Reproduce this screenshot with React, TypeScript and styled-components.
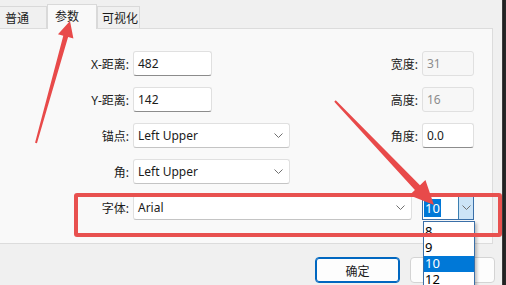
import React from 'react';
import styled, { createGlobalStyle, css } from 'styled-components';

const GlobalStyle = createGlobalStyle`
  html, body {
    margin: 0;
    padding: 0;
    background: #f0f0f0;
  }
  body {
    font-family: "Noto Sans", "Noto Sans CJK SC", sans-serif;
    color: #1b1b1b;
  }
  * { box-sizing: border-box; }
`;

const Screen = styled.div`
  position: relative;
  display: flex;
  width: 506px;
  height: 285px;
  overflow: hidden;
  background: #f0f0f0;
`;

const Dialog = styled.div`
  display: flex;
  flex-direction: column;
  width: 502px;
`;

const EdgeStrip = styled.div`
  width: 4px;
  background: linear-gradient(to right, #5a5a5a 0, #1e1e1e 1px, #2a2a2a 100%);
`;

const TabStrip = styled.div`
  display: flex;
  align-items: flex-end;
  height: 28px;
  margin-left: -1px;
  position: relative;
  z-index: 2;
`;

const Tab = styled.div<{ $width: number; $pad: number; $active?: boolean }>`
  width: ${p => p.$width}px;
  height: 22px;
  display: flex;
  align-items: center;
  padding-left: ${p => p.$pad}px;
  font-family: "Noto Sans CJK SC", sans-serif;
  font-size: 12px;
  background: #f0f0f0;
  border: 1px solid #d9d9d9;
  border-bottom: none;
  color: #1b1b1b;
  white-space: nowrap;
  ${p =>
    p.$active &&
    css`
      height: 25px;
      margin-bottom: -1px;
      background: #f9f9f9;
      padding-bottom: 3px;
    `}
`;

const Panel = styled.div`
  width: 494px;
  height: 216px;
  margin-left: -1px;
  padding: 22px 18px 0 0;
  background: #f9f9f9;
  border: 1px solid #dcdcdc;
  display: flex;
  flex-direction: column;
  gap: 11px;
`;

const Row = styled.div`
  display: flex;
  align-items: center;
  height: 25px;
`;

const Label = styled.span<{ $width?: number }>`
  ${p => p.$width !== undefined && css`width: ${p.$width}px;`}
  text-align: right;
  margin-right: 4px;
  font-family: "Noto Sans", "Noto Sans CJK SC", sans-serif;
  font-size: 12px;
  color: #1b1b1b;
  white-space: nowrap;
`;

const RightGroup = styled.div`
  margin-left: auto;
  display: flex;
  align-items: center;
`;

const Field = styled.div<{ $width: number; $disabled?: boolean }>`
  width: ${p => p.$width}px;
  height: 25px;
  display: flex;
  align-items: center;
  padding: 0 4px;
  font-size: 12px;
  background: #ffffff;
  border: 1px solid #e0e0e0;
  border-bottom-color: #8c8c8c;
  border-radius: 3px;
  color: #1b1b1b;
  ${p =>
    p.$disabled &&
    css`
      background: #f7f7f7;
      border-bottom-color: #e0e0e0;
      color: #8c8c8c;
    `}
`;

const SelectBox = styled(Field)`
  justify-content: space-between;
  padding-right: 6px;
  border-color: #e0e0e0;
  border-bottom-color: #c4c4c4;
`;

const Combo = styled.div`
  width: 52px;
  height: 25px;
  display: flex;
  background: #ffffff;
  border: 1px solid #3a6fa8;
`;

const ComboText = styled.div`
  flex: 1;
  display: flex;
  align-items: center;
  padding-left: 1px;
`;

const Selected = styled.span`
  background: #0078d7;
  color: #ffffff;
  font-size: 13px;
  line-height: 18px;
  padding: 0 1px;
`;

const ComboButton = styled.div`
  width: 15px;
  display: flex;
  align-items: center;
  justify-content: center;
  background: #cce4f7;
  border-left: 1px solid #3c7fb1;
`;

const DropList = styled.div`
  position: absolute;
  left: 423px;
  top: 221px;
  width: 52px;
  height: 70px;
  padding-top: 2px;
  background: #ffffff;
  border: 1px solid #3a6fa8;
  box-shadow: 2px 2px 3px rgba(0, 0, 0, 0.25);
  z-index: 5;
`;

const ListItem = styled.div<{ $active?: boolean }>`
  height: 16px;
  line-height: 14px;
  padding-left: 1px;
  font-size: 13px;
  color: #000;
  ${p =>
    p.$active &&
    css`
      background: #0078d7;
      color: #fff;
    `}
`;

const Footer = styled.div`
  display: flex;
  justify-content: flex-end;
  gap: 10px;
  margin-top: 13px;
  padding-right: 7px;
`;

const Button = styled.div<{ $primary?: boolean }>`
  width: 85px;
  height: 26px;
  display: flex;
  align-items: center;
  justify-content: center;
  font-family: "Noto Sans CJK SC", sans-serif;
  font-size: 12px;
  background: #fdfdfd;
  border: 1px solid ${p => (p.$primary ? '#0067c0' : '#d4d4d4')};
  box-shadow: ${p => (p.$primary ? 'inset 0 0 0 1px #0067c0' : 'none')};
  border-radius: 4px;
`;

const Highlight = styled.div`
  position: absolute;
  left: 74px;
  top: 193px;
  width: 428px;
  height: 44px;
  border: 4px solid #e8514f;
  border-radius: 3px;
  z-index: 6;
  pointer-events: none;
`;

const ArrowLayer = styled.svg`
  position: absolute;
  left: 0;
  top: 0;
  z-index: 7;
  pointer-events: none;
`;

const Chevron = () => (
  <svg width="9" height="5" viewBox="0 0 9 5">
    <polyline points="0.5,0.5 4.5,4.5 8.5,0.5" fill="none" stroke="#707070" strokeWidth="1" />
  </svg>
);

const App = () => (
  <Screen>
    <GlobalStyle />
    <Dialog>
      <TabStrip>
        <Tab $width={48} $pad={5}>普通</Tab>
        <Tab $width={50} $pad={7} $active>参数</Tab>
        <Tab $width={43} $pad={4}>可视化</Tab>
      </TabStrip>
      <Panel>
        <Row>
          <Label $width={129}>X-距离:</Label>
          <Field $width={79}>482</Field>
          <RightGroup>
            <Label>宽度:</Label>
            <Field $width={52} $disabled>31</Field>
          </RightGroup>
        </Row>
        <Row>
          <Label $width={129}>Y-距离:</Label>
          <Field $width={79}>142</Field>
          <RightGroup>
            <Label>高度:</Label>
            <Field $width={52} $disabled>16</Field>
          </RightGroup>
        </Row>
        <Row>
          <Label $width={129}>锚点:</Label>
          <SelectBox $width={157}>
            Left Upper
            <Chevron />
          </SelectBox>
          <RightGroup>
            <Label>角度:</Label>
            <Field $width={52}>0.0</Field>
          </RightGroup>
        </Row>
        <Row>
          <Label $width={129}>角:</Label>
          <SelectBox $width={157}>
            Left Upper
            <Chevron />
          </SelectBox>
        </Row>
        <Row>
          <Label $width={129}>字体:</Label>
          <SelectBox $width={279}>
            Arial
            <Chevron />
          </SelectBox>
          <RightGroup>
            <Combo>
              <ComboText>
                <Selected>10</Selected>
              </ComboText>
              <ComboButton>
                <Chevron />
              </ComboButton>
            </Combo>
          </RightGroup>
        </Row>
      </Panel>
      <Footer>
        <Button $primary>确定</Button>
        <Button>取消</Button>
      </Footer>
    </Dialog>
    <EdgeStrip />
    <DropList>
      {['8', '9', '10', '12'].map(v => (
        <ListItem key={v} $active={v === '10'}>
          {v}
        </ListItem>
      ))}
    </DropList>
    <Highlight />
    <ArrowLayer width="506" height="285" viewBox="0 0 506 285">
      <polygon
        fill="#e84a4a"
        points="36.96,143.27 68.11,37.09 73.41,38.57 70,21 57.99,34.27 63.29,35.75 35.04,142.73"
      />
      <polygon
        fill="#e84a4a"
        points="335.72,100.31 419.98,185.21 425.42,180.04 434,205 409.48,195.2 414.92,190.03 334.28,101.69"
      />
    </ArrowLayer>
  </Screen>
);

export default App;
